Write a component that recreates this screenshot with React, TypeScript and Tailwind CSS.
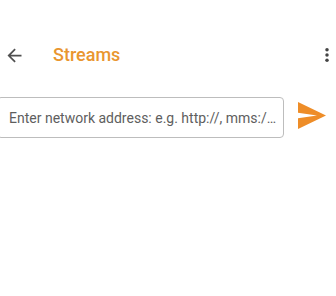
import { useState } from 'react'

const ArrowBack = () => (
  <svg viewBox="0 0 24 24" className="h-[21px] w-[21px] shrink-0" fill="#505050">
    <path d="M20 11H7.83l5.59-5.59L12 4l-8 8 8 8 1.41-1.41L7.83 13H20v-2z" />
  </svg>
)

const MoreVert = () => (
  <svg viewBox="0 0 24 24" className="-mr-[2px] h-[22px] w-[22px] shrink-0" fill="#444444">
    <circle cx="12" cy="6.2" r="1.9" />
    <circle cx="12" cy="12" r="1.9" />
    <circle cx="12" cy="17.8" r="1.9" />
  </svg>
)

const SendIcon = () => (
  <svg viewBox="0 0 28 27" className="h-[27px] w-[28px] shrink-0">
    <path d="M0 0L28 13.5L0 27L0 16.2L19 13.5L0 10.8Z" fill="#ee8d28" />
  </svg>
)

export default function App() {
  const [address, setAddress] = useState('')

  return (
    <div className="h-[296px] w-[336px] overflow-hidden bg-white font-['Roboto','Liberation_Sans',sans-serif]">
      <div className="mt-[27px] flex h-[56px] items-center pl-[4px]">
        <ArrowBack />
        <h1 className="ml-[28px] flex-1 text-[18px] font-medium leading-none text-[#e9962f]">Streams</h1>
        <MoreVert />
      </div>

      <div className="mt-[14px] flex items-center">
        <input
          value={address}
          onChange={(e) => setAddress(e.target.value)}
          placeholder="Enter network address: e.g. http://, mms:/…"
          className="-ml-[3px] h-[41px] w-[287px] shrink-0 truncate rounded-[4px] border border-[#bdbdbd] bg-white pl-[11px] pr-[2px] text-[14px] text-[#333] outline-none placeholder:text-[#5e5e5e]"
        />
        <div className="ml-[14px] -mt-[4px]">
          <SendIcon />
        </div>
      </div>
    </div>
  )
}
